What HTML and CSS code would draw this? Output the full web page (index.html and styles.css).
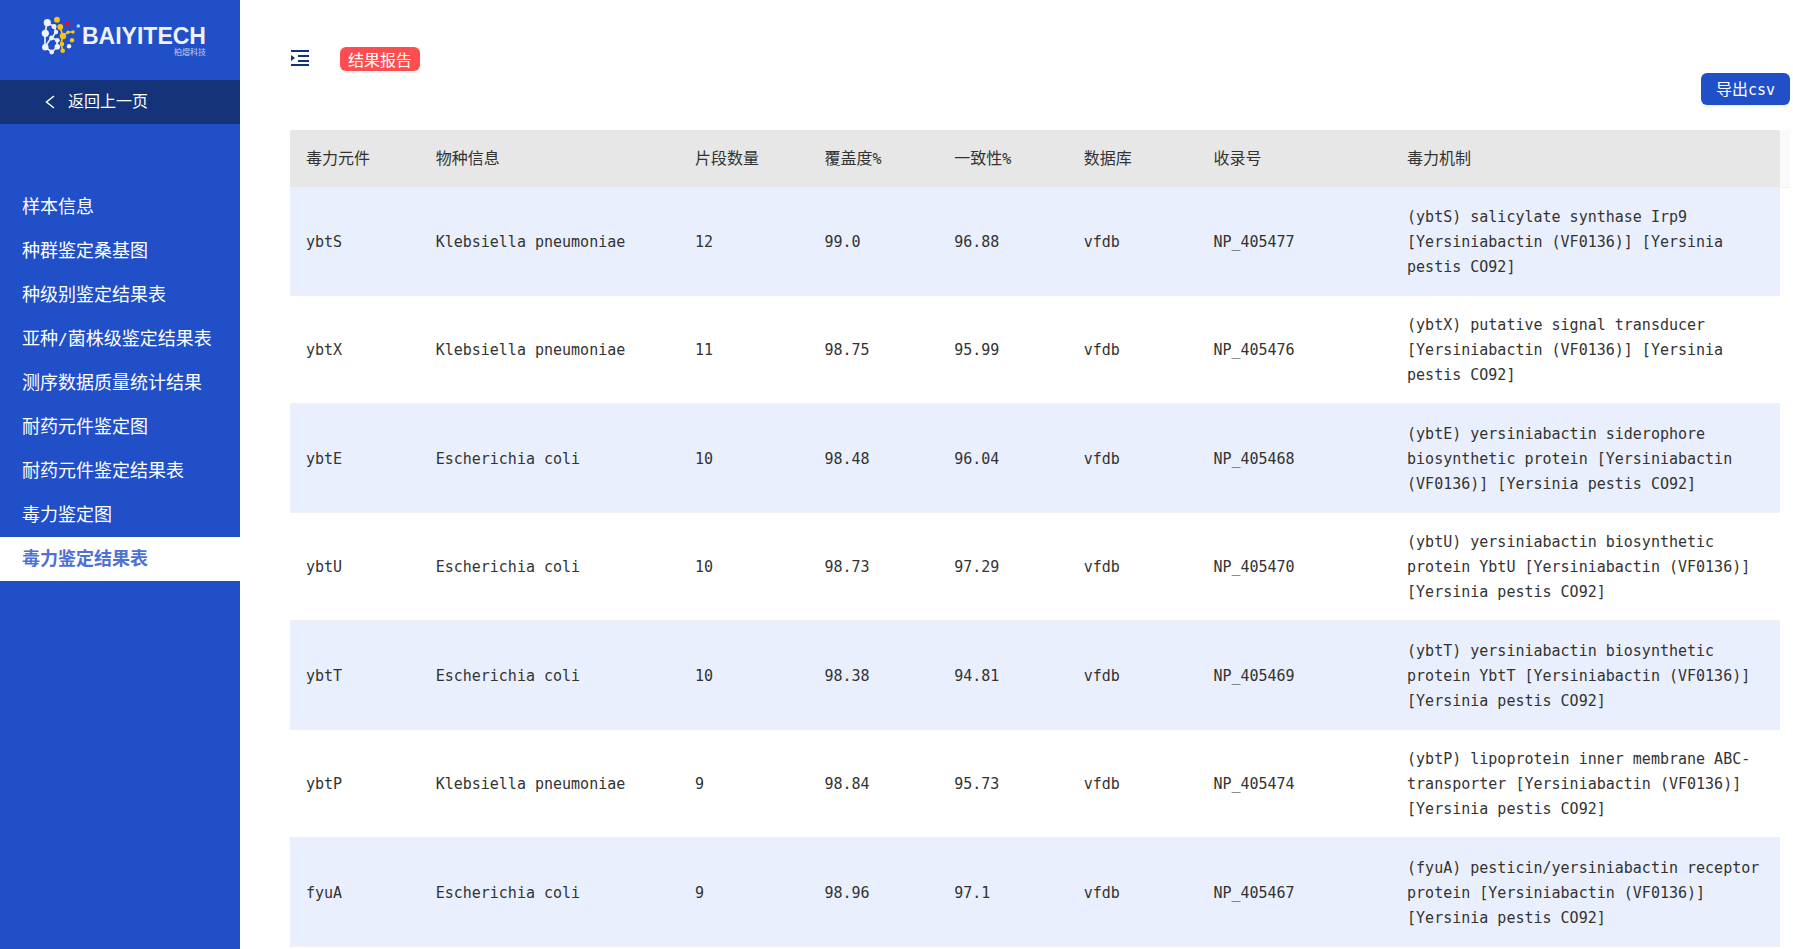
FILE: index.html
```html
<!DOCTYPE html>
<html lang="zh-CN">
<head>
<meta charset="utf-8">
<title>毒力鉴定结果表</title>
<link rel="stylesheet" href="styles.css">
</head>
<body>
<div class="layout">
  <aside class="sidebar">
    <div class="brand">
      <svg class="brand-mark" width="40" height="40" viewBox="0 0 40 40" aria-hidden="true">
        <g stroke="#f0f2fa" stroke-width="1.6" fill="none">
          <path d="M7 7L5 17L5 31L12 36L17 31L17 24L12 22M7 7L14 10L16 16L12 22M5 31L11 22"/>
        </g>
        <g stroke="#fcc20f" stroke-width="1.6" fill="none">
          <path d="M20 11L23 20L21 28L23 35M23 20L28 16L33 16"/>
        </g>
        <g fill="#f0f2fa">
          <circle cx="7.300" cy="6.700" r="3.600"/><circle cx="5.300" cy="17.300" r="3.600"/><circle cx="5.300" cy="31.300" r="3.200"/>
          <circle cx="11.700" cy="36" r="2.400"/><circle cx="17.300" cy="30.700" r="2.800"/><circle cx="17.300" cy="24.300" r="2.400"/>
          <circle cx="11.500" cy="22" r="2.400"/><circle cx="14" cy="10.500" r="2.500"/><circle cx="16" cy="16" r="2.200"/>
          <circle cx="29" cy="30.300" r="2.200"/>
        </g>
        <g fill="#fcc20f">
          <circle cx="17" cy="3.700" r="2.900"/><circle cx="20.300" cy="11" r="2.900"/><circle cx="23" cy="20" r="3.200"/>
          <circle cx="22" cy="28" r="2.200"/><circle cx="22.700" cy="34.700" r="2.300"/><circle cx="28" cy="16.300" r="1.700"/>
          <circle cx="33" cy="16" r="1.800"/><circle cx="32" cy="24.300" r="2.200"/>
        </g>
        <circle cx="28" cy="8" r="2.200" fill="#f5052f"/>
        <circle cx="38.300" cy="10" r="1.800" fill="#c4cfe9"/>
      </svg>
      <div class="brand-name">
        <span class="brand-latin">BAIYITECH</span>
        <span class="brand-cn">柏熠科技</span>
      </div>
    </div>
    <a class="back" href="#">
      <svg width="10" height="14" viewBox="0 0 10 14" aria-hidden="true"><path d="M9 1L1.500 7L9 13" fill="none" stroke="#fff" stroke-width="1.500"/></svg>
      <span>返回上一页</span>
    </a>
    <nav class="menu">
      <a href="#">样本信息</a>
      <a href="#">种群鉴定桑基图</a>
      <a href="#">种级别鉴定结果表</a>
      <a href="#">亚种<span class="slash">/</span>菌株级鉴定结果表</a>
      <a href="#">测序数据质量统计结果</a>
      <a href="#">耐药元件鉴定图</a>
      <a href="#">耐药元件鉴定结果表</a>
      <a href="#">毒力鉴定图</a>
      <a href="#" class="current" aria-current="page">毒力鉴定结果表</a>
    </nav>
  </aside>
  <main class="content">
    <header class="topbar">
      <button class="fold" type="button" aria-label="折叠菜单">
        <svg width="18" height="16" viewBox="0 0 18 16" aria-hidden="true"><path d="M0 0h18v2H0zM7 5h11v2H7zM7 10h11v2H7zM0 14h18v2H0zM0 5l4 3-4 3z" fill="#14317a"/></svg>
      </button>
      <a class="report" href="#">结果报告</a>
    </header>
    <div class="actions"><button class="export" type="button">导出<span class="latin">csv</span></button></div>
    <div class="table-wrap">
      <table class="results">
        <colgroup><col class="w100"><col class="w200"><col class="w100"><col class="w100"><col class="w100"><col class="w100"><col class="w150"><col></colgroup>
        <thead><tr><th>毒力元件</th><th>物种信息</th><th>片段数量</th><th>覆盖度<span class="latin">%</span></th><th>一致性<span class="latin">%</span></th><th>数据库</th><th>收录号</th><th>毒力机制</th></tr></thead>
        <tbody>
          <tr><td>ybtS</td><td>Klebsiella pneumoniae</td><td>12</td><td>99.0</td><td>96.88</td><td>vfdb</td><td>NP_405477</td><td>(ybtS) salicylate synthase Irp9 [Yersiniabactin (VF0136)] [Yersinia pestis CO92]</td></tr>
          <tr><td>ybtX</td><td>Klebsiella pneumoniae</td><td>11</td><td>98.75</td><td>95.99</td><td>vfdb</td><td>NP_405476</td><td>(ybtX) putative signal transducer [Yersiniabactin (VF0136)] [Yersinia pestis CO92]</td></tr>
          <tr><td>ybtE</td><td>Escherichia coli</td><td>10</td><td>98.48</td><td>96.04</td><td>vfdb</td><td>NP_405468</td><td>(ybtE) yersiniabactin siderophore biosynthetic protein [Yersiniabactin (VF0136)] [Yersinia pestis CO92]</td></tr>
          <tr><td>ybtU</td><td>Escherichia coli</td><td>10</td><td>98.73</td><td>97.29</td><td>vfdb</td><td>NP_405470</td><td>(ybtU) yersiniabactin biosynthetic protein YbtU [Yersiniabactin (VF0136)] [Yersinia pestis CO92]</td></tr>
          <tr><td>ybtT</td><td>Escherichia coli</td><td>10</td><td>98.38</td><td>94.81</td><td>vfdb</td><td>NP_405469</td><td>(ybtT) yersiniabactin biosynthetic protein YbtT [Yersiniabactin (VF0136)] [Yersinia pestis CO92]</td></tr>
          <tr><td>ybtP</td><td>Klebsiella pneumoniae</td><td>9</td><td>98.84</td><td>95.73</td><td>vfdb</td><td>NP_405474</td><td>(ybtP) lipoprotein inner membrane ABC-transporter [Yersiniabactin (VF0136)] [Yersinia pestis CO92]</td></tr>
          <tr><td>fyuA</td><td>Escherichia coli</td><td>9</td><td>98.96</td><td>97.1</td><td>vfdb</td><td>NP_405467</td><td>(fyuA) pesticin/yersiniabactin receptor protein [Yersiniabactin (VF0136)] [Yersinia pestis CO92]</td></tr>
        </tbody>
      </table>
      <div class="scroll-gutter"></div>
    </div>
  </main>
</div>
</body>
</html>
```
FILE: styles.css
```css
* { box-sizing: border-box; }
body {
  margin: 0;
  color: #333;
  background: #fff;
  font: 16px/25px "Noto Sans CJK SC", sans-serif;
}
a { color: inherit; text-decoration: none; }
button { font: inherit; border: 0; cursor: pointer; }
.latin { font-family: "DejaVu Sans Mono", monospace; font-size: 15px; line-height: 1; }
.slash { font-family: "DejaVu Sans Mono", monospace; font-size: 16px; line-height: 1; }

.layout { display: flex; min-height: 100vh; }
.sidebar { flex: 0 0 240px; background: #204fc8; color: #fff; }
.brand { display: flex; height: 80px; padding: 16px 0 0 40px; gap: 2px; }
.brand-mark { flex: none; overflow: visible; }
.brand-name { display: flex; flex-direction: column; align-items: flex-end; padding-top: 8px; color: #f0f2fa; }
.brand-latin { font: bold 23px/24px "Liberation Sans", Arial, sans-serif; }
.brand-cn { font-size: 8px; line-height: 8px; color: #c4cfe9; }
.back {
  display: flex; align-items: center; gap: 13px;
  height: 44px; padding-left: 45px; background: #143378;
}
.back span { padding-bottom: 3px; }
.menu { padding-top: 61px; font-size: 18px; }
.menu a { display: block; height: 44px; padding-left: 22px; line-height: 40px; white-space: nowrap; }
.menu .current { background: #fff; color: #4d72d3; font-weight: bold; }

.content { flex: 1; min-width: 0; padding: 46px 3px 0 50px; }
.topbar { display: flex; align-items: flex-end; gap: 31px; height: 25px; padding-left: 1px; }
.fold { display: flex; padding: 0 0 5px; background: none; }
.report {
  padding: 0 8px; border-radius: 6px; background: #ff4d4f; color: #fff;
  line-height: 24px; box-shadow: 0 2px 0 rgba(0, 0, 0, .03);
}
.actions { display: flex; justify-content: flex-end; padding: 2px 0 25px; }
.export {
  height: 32px; padding: 0 15px 2px; border-radius: 6px; background: #204fc8; color: #fff;
  box-shadow: 0 2px 0 rgba(5, 145, 255, .08);
}
.table-wrap { display: flex; align-items: flex-start; }
.results { flex: 1; table-layout: fixed; border-collapse: separate; border-spacing: 0; width: 100%; }
.w100 { width: 8.7%; }
.w200 { width: 17.4%; }
.w150 { width: 13%; }
.results th, .results td { padding: 16px; text-align: left; border-bottom: 1px solid #f0f0f0; }
.results th { background: #e7e7e7; font-weight: normal; border-color: #e7e7e7; padding: 15px 16px 16px; }
.results th:first-child { border-radius: 2px 0 0 0; }
.results th:last-child { border-radius: 0 2px 0 0; }
.results td { padding: 17px 16px 15px; font: 15px/25px "DejaVu Sans Mono", monospace; }
.results tbody tr:nth-child(odd) td { background: #e9effc; padding: 18px 16px 15px; }
.scroll-gutter { flex: 0 0 10px; height: 58px; background: #fafafa; border-bottom: 1px solid #f0f0f0; }
```
